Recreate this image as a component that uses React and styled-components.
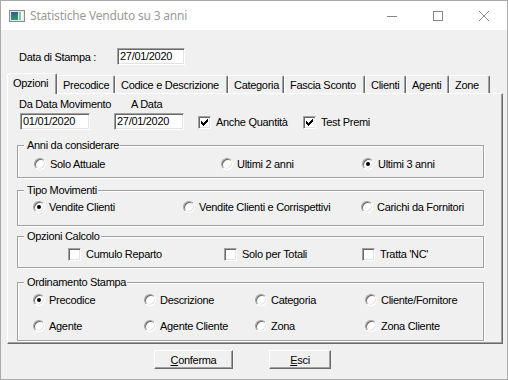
import React from 'react';
import styled, { createGlobalStyle } from 'styled-components';

const GlobalStyle = createGlobalStyle`
  html, body {
    margin: 0;
    padding: 0;
    background: #ffffff;
  }
  body {
    font-family: "Liberation Sans", Arial, sans-serif;
    font-size: 11px;
    letter-spacing: -0.3px;
    color: #000;
  }
`;

const Window = styled.div`
  width: 508px;
  height: 380px;
  box-sizing: border-box;
  border: 1px solid #aaaaaa;
  background: #f0f0f0;
  display: flex;
  flex-direction: column;
  overflow: hidden;
`;

const TitleBar = styled.div`
  height: 29px;
  flex-shrink: 0;
  background: #ffffff;
  display: flex;
  align-items: center;
  padding-left: 8px;
`;

const TitleText = styled.span`
  margin-left: 5px;
  flex: 1;
  font-family: "Noto Sans", "Liberation Sans", sans-serif;
  font-size: 12px;
  letter-spacing: -0.2px;
  color: #9a9a9a;
`;

const Controls = styled.div`
  display: flex;
  height: 100%;
`;

const ControlButton = styled.div`
  width: 46px;
  height: 100%;
  display: flex;
  align-items: center;
  justify-content: center;
`;

const Body = styled.div`
  flex: 1;
  display: flex;
  flex-direction: column;
  padding: 0 4px 0 6px;
`;

const StampaRow = styled.div`
  display: flex;
  align-items: center;
  margin: 18px 0 0 12px;
`;

const StampaLabel = styled.span`
  width: 98px;
`;

const TextBox = styled.div`
  width: ${p => p.$w}px;
  height: 17px;
  box-sizing: border-box;
  margin-left: ${p => p.$ml || 0}px;
  border: 1px solid;
  border-color: #a0a0a0 #ffffff #ffffff #a0a0a0;
  box-shadow: inset 1px 1px 0 #696969, inset -1px -1px 0 #e3e3e3;
  background: #ffffff;
  padding-left: 2px;
  line-height: 15px;
`;

const TabStrip = styled.div`
  display: flex;
  align-items: flex-end;
  height: 20px;
  margin-top: 8px;
`;

const Tab = styled.div`
  width: ${p => p.$w}px;
  height: ${p => (p.$active ? 21 : 18)}px;
  box-sizing: border-box;
  padding: 0 0 ${p => (p.$active ? 3 : 0)}px 5px;
  margin-bottom: ${p => (p.$active ? -1 : 0)}px;
  position: relative;
  z-index: ${p => (p.$active ? 1 : 0)};
  background: #f0f0f0;
  border-top: 1px solid #ffffff;
  border-left: 1px solid #ffffff;
  border-right: 1px solid #696969;
  border-radius: 2px 2px 0 0;
  box-shadow: inset -1px 0 0 #a0a0a0;
  display: flex;
  align-items: center;
  white-space: nowrap;
`;

const Panel = styled.div`
  height: 251px;
  box-sizing: border-box;
  border-top: 1px solid #ffffff;
  border-left: 1px solid #ffffff;
  border-right: 1px solid #696969;
  border-bottom: 1px solid #696969;
  box-shadow: inset -1px -1px 0 #a0a0a0;
  padding: 4px 0 0 9px;
  display: flex;
  flex-direction: column;
`;

const DateRow = styled.div`
  display: flex;
  align-items: flex-end;
  padding-left: 2px;
`;

const DateField = styled.div`
  display: flex;
  flex-direction: column;
  gap: 2px;
  width: ${p => p.$w}px;
  flex-shrink: 0;
  margin-left: ${p => p.$ml || 0}px;
`;

const FieldLabel = styled.span`
  line-height: 13px;
  white-space: nowrap;
  padding-left: ${p => p.$pl || 0}px;
`;

const GroupBox = styled.fieldset`
  margin: ${p => p.$mt}px 0 0;
  padding: ${p => p.$pt}px 0 ${p => p.$pb}px;
  width: 467px;
  min-width: 0;
  box-sizing: border-box;
  border: 1px solid #a0a0a0;
  box-shadow: inset 1px 1px 0 #ffffff, 1px 1px 0 #ffffff;
`;

const Legend = styled.legend`
  margin-left: 6px;
  padding: 0 1px 0 3px;
  line-height: 13px;
  background: #f0f0f0;
`;

const OptionGrid = styled.div`
  display: grid;
  grid-template-columns: ${p => p.$cols};
  padding-left: ${p => p.$pl}px;
  row-gap: 10px;
`;

const OptionItem = styled.label`
  display: flex;
  align-items: center;
  height: 16px;
  gap: ${p => (p.$check ? 5 : 4)}px;
  width: ${p => (p.$w ? `${p.$w}px` : 'auto')};
  flex-shrink: 0;
  margin-left: ${p => p.$ml || 0}px;
  align-self: ${p => (p.$bottom ? 'flex-end' : 'auto')};
  white-space: nowrap;
`;

const RadioCircle = styled.span`
  width: 12px;
  height: 12px;
  box-sizing: border-box;
  border-radius: 50%;
  border: 1px solid;
  border-color: #a0a0a0 #ffffff #ffffff #a0a0a0;
  box-shadow: inset 1px 1px 0 #696969, inset -1px -1px 0 #e3e3e3;
  background: #ffffff;
  display: flex;
  align-items: center;
  justify-content: center;
  flex-shrink: 0;

  &::after {
    content: '';
    width: 4px;
    height: 4px;
    border-radius: 50%;
    background: ${p => (p.$on ? '#000' : 'transparent')};
  }
`;

const CheckSquare = styled.span`
  width: 13px;
  height: 13px;
  box-sizing: border-box;
  border: 1px solid;
  border-color: #a0a0a0 #ffffff #ffffff #a0a0a0;
  box-shadow: inset 1px 1px 0 #696969, inset -1px -1px 0 #e3e3e3;
  background: #ffffff;
  display: flex;
  align-items: center;
  justify-content: center;
  flex-shrink: 0;
`;

const ButtonRow = styled.div`
  display: flex;
  gap: 36px;
  margin-top: 6px;
  padding-left: 147px;
`;

const PushButton = styled.button`
  width: ${p => p.$w}px;
  height: 19px;
  box-sizing: border-box;
  padding: 0;
  font: inherit;
  letter-spacing: inherit;
  color: #000;
  background: #f0f0f0;
  border-top: 1px solid #ffffff;
  border-left: 1px solid #ffffff;
  border-right: 1px solid #696969;
  border-bottom: 1px solid #696969;
  box-shadow: inset -1px -1px 0 #a0a0a0;
`;

const checkPixels = [
  '......X',
  '.....XX',
  'X...XXX',
  'XX.XXX.',
  'XXXXX..',
  '.XXX...',
  '..X....',
];

const CheckMark = () => (
  <svg width="7" height="7" viewBox="0 0 7 7" shapeRendering="crispEdges">
    {checkPixels.flatMap((row, y) =>
      row.split('').map((c, x) =>
        c === 'X' ? <rect key={`${x}-${y}`} x={x} y={y} width="1" height="1" fill="#000" /> : null
      )
    )}
  </svg>
);

const Radio = ({ label, on }) => (
  <OptionItem>
    <RadioCircle $on={on} />
    {label}
  </OptionItem>
);

const Check = ({ label, on, ...rest }) => (
  <OptionItem $check {...rest}>
    <CheckSquare>{on && <CheckMark />}</CheckSquare>
    {label}
  </OptionItem>
);

const AppIcon = () => (
  <svg width="16" height="13" viewBox="0 0 16 13">
    <defs>
      <linearGradient id="ic" x1="0" y1="0" x2="0" y2="1">
        <stop offset="0" stopColor="#2f5f8f" />
        <stop offset="1" stopColor="#2f9a6a" />
      </linearGradient>
    </defs>
    <rect x="0.5" y="1.5" width="15" height="11" fill="#e6e6e6" stroke="#8c8c8c" />
    <rect x="2" y="3" width="7" height="8" fill="url(#ic)" />
    <rect x="10" y="3" width="2" height="8" fill="#7ccf93" />
    <rect x="12" y="3" width="2" height="8" fill="#ffffff" />
  </svg>
);

const tabs = [
  { label: 'Opzioni', w: 50 },
  { label: 'Precodice', w: 58 },
  { label: 'Codice e Descrizione', w: 113 },
  { label: 'Categoria', w: 56 },
  { label: 'Fascia Sconto', w: 81 },
  { label: 'Clienti', w: 41 },
  { label: 'Agenti', w: 43 },
  { label: 'Zone', w: 41 },
];

export default function App() {
  return (
    <>
      <GlobalStyle />
      <Window>
        <TitleBar>
          <AppIcon />
          <TitleText>Statistiche Venduto su 3 anni</TitleText>
          <Controls>
            <ControlButton>
              <svg width="10" height="10" viewBox="0 0 10 10">
                <path d="M0 5.5H10" stroke="#888" strokeWidth="1" />
              </svg>
            </ControlButton>
            <ControlButton>
              <svg width="10" height="10" viewBox="0 0 10 10">
                <rect x="0.5" y="0.5" width="9" height="9" fill="none" stroke="#888" strokeWidth="1" />
              </svg>
            </ControlButton>
            <ControlButton>
              <svg width="10" height="10" viewBox="0 0 10 10">
                <path d="M0 0L10 10M10 0L0 10" stroke="#888" strokeWidth="1" />
              </svg>
            </ControlButton>
          </Controls>
        </TitleBar>

        <Body>
          <StampaRow>
            <StampaLabel>Data di Stampa :</StampaLabel>
            <TextBox $w={68}>27/01/2020</TextBox>
          </StampaRow>

          <TabStrip>
            {tabs.map((t, i) => (
              <Tab key={t.label} $w={t.w} $active={i === 0}>
                {t.label}
              </Tab>
            ))}
          </TabStrip>

          <Panel>
            <DateRow>
              <DateField $w={71}>
                <FieldLabel>Da Data Movimento</FieldLabel>
                <TextBox $w={70} $ml={1}>01/01/2020</TextBox>
              </DateField>
              <DateField $w={70} $ml={24}>
                <FieldLabel $pl={17}>A Data</FieldLabel>
                <TextBox $w={70}>27/01/2020</TextBox>
              </DateField>
              <Check label="Anche Quantità" on $w={105} $ml={14} $bottom />
              <Check label="Test Premi" on $bottom />
            </DateRow>

            <GroupBox $mt={9} $pt={4} $pb={5}>
              <Legend>Anni da considerare</Legend>
              <OptionGrid $pl={16} $cols="187px 141px auto">
                <Radio label="Solo Attuale" />
                <Radio label="Ultimi 2 anni" />
                <Radio label="Ultimi 3 anni" on />
              </OptionGrid>
            </GroupBox>

            <GroupBox $mt={6} $pt={2} $pb={10}>
              <Legend>Tipo Movimenti</Legend>
              <OptionGrid $pl={15} $cols="150px 178px auto">
                <Radio label="Vendite Clienti" on />
                <Radio label="Vendite Clienti e Corrispettivi" />
                <Radio label="Carichi da Fornitori" />
              </OptionGrid>
            </GroupBox>

            <GroupBox $mt={4} $pt={3} $pb={5}>
              <Legend>Opzioni Calcolo</Legend>
              <OptionGrid $pl={50} $cols="156px 138px auto">
                <Check label="Cumulo Reparto" />
                <Check label="Solo per Totali" />
                <Check label="Tratta 'NC'" />
              </OptionGrid>
            </GroupBox>

            <GroupBox $mt={8} $pt={3} $pb={6}>
              <Legend>Ordinamento Stampa</Legend>
              <OptionGrid $pl={15} $cols="111px 111px 110px auto">
                <Radio label="Precodice" on />
                <Radio label="Descrizione" />
                <Radio label="Categoria" />
                <Radio label="Cliente/Fornitore" />
                <Radio label="Agente" />
                <Radio label="Agente Cliente" />
                <Radio label="Zona" />
                <Radio label="Zona Cliente" />
              </OptionGrid>
            </GroupBox>
          </Panel>

          <ButtonRow>
            <PushButton $w={79}>
              <u>C</u>onferma
            </PushButton>
            <PushButton $w={62}>
              <u>E</u>sci
            </PushButton>
          </ButtonRow>
        </Body>
      </Window>
    </>
  );
}
